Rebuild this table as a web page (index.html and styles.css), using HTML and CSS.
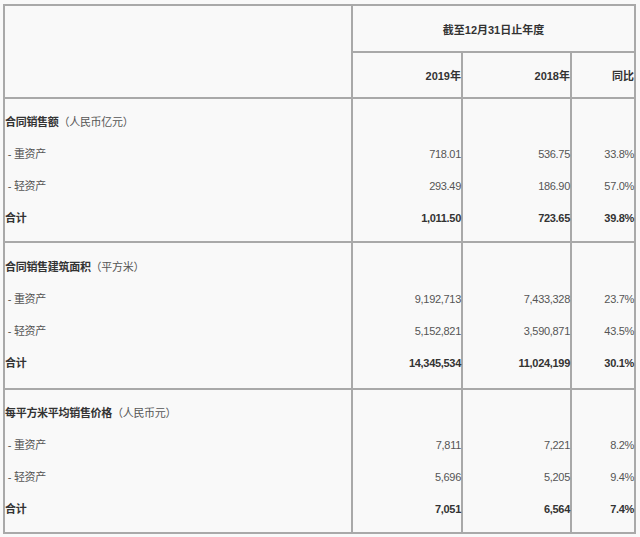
FILE: index.html
```html
<!DOCTYPE html>
<html>
<head>
<meta charset="utf-8">
<link rel="stylesheet" href="styles.css">
</head>
<body>
<table class="report">
  <colgroup>
    <col class="c-label"><col class="c-num"><col class="c-num2"><col class="c-pct">
  </colgroup>
  <thead>
    <tr class="h1">
      <th rowspan="2"></th>
      <th colspan="3" class="center">截至12月31日止年度</th>
    </tr>
    <tr class="h2">
      <th class="right">2019年</th>
      <th class="right">2018年</th>
      <th class="right">同比</th>
    </tr>
  </thead>
  <tbody>
    <tr class="sec">
      <td>
        <div class="ln"><b>合同销售额</b>（人民币亿元）</div>
        <div class="ln">&nbsp;- 重资产</div>
        <div class="ln">&nbsp;- 轻资产</div>
        <div class="ln"><b>合计</b></div>
      </td>
      <td class="right">
        <div class="ln"></div>
        <div class="ln">718.01</div>
        <div class="ln">293.49</div>
        <div class="ln"><b>1,011.50</b></div>
      </td>
      <td class="right">
        <div class="ln"></div>
        <div class="ln">536.75</div>
        <div class="ln">186.90</div>
        <div class="ln"><b>723.65</b></div>
      </td>
      <td class="right">
        <div class="ln"></div>
        <div class="ln">33.8%</div>
        <div class="ln">57.0%</div>
        <div class="ln"><b>39.8%</b></div>
      </td>
    </tr>
    <tr class="sec sec-mid">
      <td>
        <div class="ln"><b>合同销售建筑面积</b>（平方米）</div>
        <div class="ln">&nbsp;- 重资产</div>
        <div class="ln">&nbsp;- 轻资产</div>
        <div class="ln"><b>合计</b></div>
      </td>
      <td class="right">
        <div class="ln"></div>
        <div class="ln">9,192,713</div>
        <div class="ln">5,152,821</div>
        <div class="ln"><b>14,345,534</b></div>
      </td>
      <td class="right">
        <div class="ln"></div>
        <div class="ln">7,433,328</div>
        <div class="ln">3,590,871</div>
        <div class="ln"><b>11,024,199</b></div>
      </td>
      <td class="right">
        <div class="ln"></div>
        <div class="ln">23.7%</div>
        <div class="ln">43.5%</div>
        <div class="ln"><b>30.1%</b></div>
      </td>
    </tr>
    <tr class="sec">
      <td>
        <div class="ln"><b>每平方米平均销售价格</b>（人民币元）</div>
        <div class="ln">&nbsp;- 重资产</div>
        <div class="ln">&nbsp;- 轻资产</div>
        <div class="ln"><b>合计</b></div>
      </td>
      <td class="right">
        <div class="ln"></div>
        <div class="ln">7,811</div>
        <div class="ln">5,696</div>
        <div class="ln"><b>7,051</b></div>
      </td>
      <td class="right">
        <div class="ln"></div>
        <div class="ln">7,221</div>
        <div class="ln">5,205</div>
        <div class="ln"><b>6,564</b></div>
      </td>
      <td class="right">
        <div class="ln"></div>
        <div class="ln">8.2%</div>
        <div class="ln">9.4%</div>
        <div class="ln"><b>7.4%</b></div>
      </td>
    </tr>
  </tbody>
</table>
</body>
</html>
```
FILE: styles.css
```css
html, body {
  background: #f9f9f9;
}
body {
  margin: 0;
  padding: 4px 0 0 3px;
  font-family: "Liberation Sans", "Noto Sans CJK SC", sans-serif;
  font-size: 11px;
  color: #555;
}
.report {
  border-collapse: collapse;
  width: 633px;
  table-layout: fixed;
  border: 2px solid #a9a9a9;
}
.c-label { width: 348px; }
.c-num { width: 110px; }
.c-num2 { width: 109px; }
.c-pct { width: 64px; }
.report th, .report td {
  border: 2px solid #a9a9a9;
  padding: 0;
}
.report th {
  font-weight: bold;
  color: #333;
  vertical-align: middle;
}
.h1 { height: 47px; }
.h2 { height: 46px; }
.center { text-align: center; }
.right { text-align: right; }
.sec td {
  padding: 7px 0;
  vertical-align: top;
}
.sec-mid td {
  padding: 8px 0 9px;
}
.ln {
  height: 32px;
  line-height: 32px;
  white-space: nowrap;
  letter-spacing: -0.3px;
}
b {
  color: #333;
}
```
